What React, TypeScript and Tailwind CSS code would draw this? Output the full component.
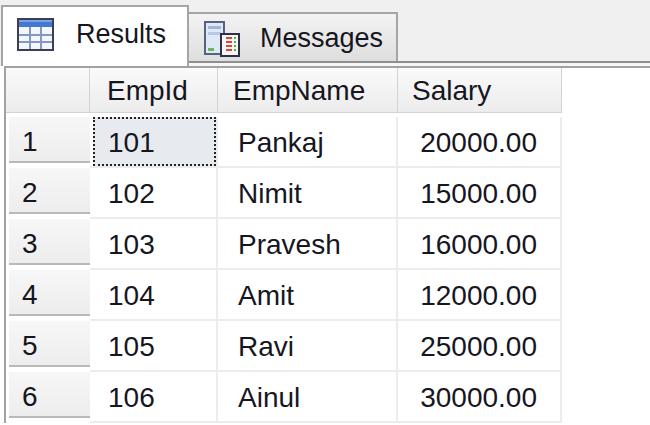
import React from 'react';

const rows = [
  { n: 1, id: '101', name: 'Pankaj', salary: '20000.00' },
  { n: 2, id: '102', name: 'Nimit', salary: '15000.00' },
  { n: 3, id: '103', name: 'Pravesh', salary: '16000.00' },
  { n: 4, id: '104', name: 'Amit', salary: '12000.00' },
  { n: 5, id: '105', name: 'Ravi', salary: '25000.00' },
  { n: 6, id: '106', name: 'Ainul', salary: '30000.00' },
];

function GridIcon() {
  return (
    <svg width="38" height="34" viewBox="0 0 38 34">
      <rect x="1" y="1" width="35" height="31" fill="#f3f6fb" stroke="#3d3d57" strokeWidth="2" />
      <rect x="2" y="2" width="33" height="7" fill="#4378d2" />
      <rect x="2" y="2" width="33" height="2" fill="#7aa3e6" />
      <path d="M13 9V31M24 9V31M2 17H35M2 24H35" stroke="#8399c2" strokeWidth="2" />
    </svg>
  );
}

function MessagesIcon() {
  return (
    <svg width="38" height="36" viewBox="0 0 38 36">
      <rect x="2" y="1" width="19" height="32" fill="#dfe9f5" stroke="#56627f" strokeWidth="2" />
      <rect x="5" y="5" width="13" height="3" fill="#9fb6d8" />
      <rect x="5" y="11" width="13" height="3" fill="#b7c9e2" />
      <rect x="5" y="27" width="6" height="3" fill="#6bb65a" />
      <rect x="18" y="13" width="18" height="22" fill="#f5f5f5" stroke="#2f2f4a" strokeWidth="2" />
      <path d="M23 17H29M23 21H29M23 25H29M23 29H29" stroke="#d9473b" strokeWidth="2" />
      <path d="M31 17H33M31 21H33M31 25H33M31 29H33" stroke="#58ad49" strokeWidth="2" />
    </svg>
  );
}

export default function App() {
  return (
    <div
      className="h-[425px] w-[650px] overflow-hidden bg-white text-[28px] text-[#16161f]"
      style={{ fontFamily: '"Liberation Sans", Arial, sans-serif' }}
    >
      {/* Tab strip */}
      <div className="flex h-[66px] bg-[#f0f0f0]">
        <div className="ml-[1px] mt-[5px] flex h-[61px] w-[188px] items-center gap-[21px] border-x-2 border-t-2 border-[#a5a5a5] bg-white pb-[4px] pl-[14px] text-[27px]">
          <GridIcon />
          <span>Results</span>
        </div>
        <div className="flex flex-1 flex-col">
          <div className="mt-[10px] flex h-[51px] items-end">
            <div className="flex h-[49px] w-[209px] items-center gap-[19px] border-r-2 border-t-2 border-[#a5a5a5] bg-gradient-to-b from-[#f3f3f3] to-[#dedede] pl-[14px] pt-[2px] text-[27px]">
              <MessagesIcon />
              <span>Messages</span>
            </div>
          </div>
          <div className="h-[2px] bg-[#8e8e8e]" />
          <div className="h-[3px] bg-[#f6f6f6]" />
        </div>
      </div>

      {/* Results grid */}
      <div className="ml-[4px] border-l-2 border-t-2 border-[#a2a2a2]">
        <div className="flex">
          <div className="h-[49px] w-[84px] bg-white">
            <div className="h-[45px] border-b border-r border-[#d3d3d3] bg-gradient-to-b from-[#fafafa] to-[#ececec]" />
          </div>
          {[
            { label: 'EmpId', w: 'w-[128px]', pl: 'pl-[17px]' },
            { label: 'EmpName', w: 'w-[180px]', pl: 'pl-[15px]' },
            { label: 'Salary', w: 'w-[164px]', pl: 'pl-[14px]' },
          ].map((c) => (
            <div key={c.label} className={`h-[49px] ${c.w} bg-white`}>
              <div
                className={`flex h-[45px] items-center border-b border-r border-[#d3d3d3] bg-gradient-to-b from-[#fafafa] to-[#ececec] pt-[2px] ${c.pl}`}
              >
                {c.label}
              </div>
            </div>
          ))}
        </div>

        {rows.map((r) => (
          <div key={r.n} className="flex h-[51px]">
            <div className="flex w-[84px] flex-col bg-white pl-[3px]">
              <div className="flex h-[46px] items-center border-b-2 border-[#b9b9b9] bg-gradient-to-b from-[#f7f7f7] to-[#ededed] pl-[13px] pt-[6px]">
                {r.n}
              </div>
            </div>
            <div className="flex w-[128px] border-b-2 border-r-2 border-[#ececec] pl-[3px]">
              {r.n === 1 ? (
                <div className="flex flex-1 items-center border-2 border-dotted border-[#222] bg-[#e7ebf0] pl-[13px] pt-[3px]">
                  {r.id}
                </div>
              ) : (
                <div className="flex flex-1 items-center pl-[15px] pt-[3px]">{r.id}</div>
              )}
            </div>
            <div className="flex w-[180px] items-center border-b-2 border-r-2 border-[#ececec] pl-[20px] pt-[3px]">
              {r.name}
            </div>
            <div className="flex w-[164px] items-center justify-end border-b-2 border-r-2 border-[#ececec] pr-[23px] pt-[3px]">
              {r.salary}
            </div>
          </div>
        ))}
      </div>
    </div>
  );
}
